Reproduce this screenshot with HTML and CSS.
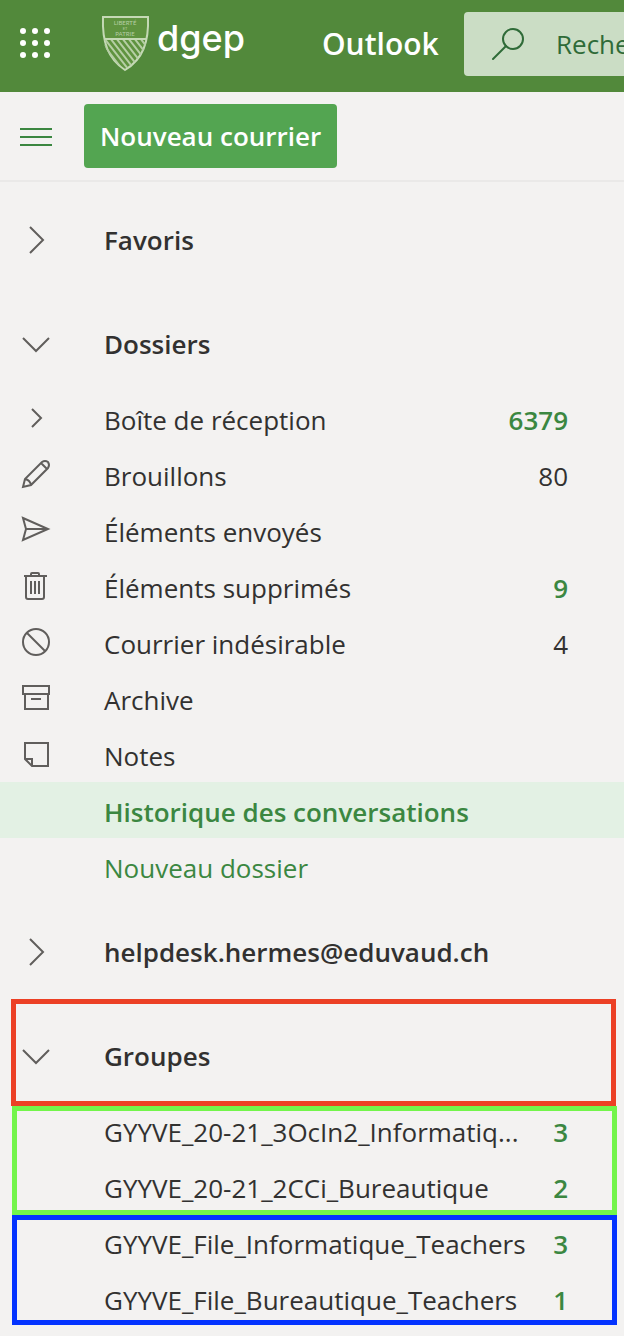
FILE: index.html
```html
<!DOCTYPE html>
<html lang="fr">
<head>
<meta charset="utf-8">
<meta name="viewport" content="width=device-width, initial-scale=1">
<title>Outlook</title>
<link rel="stylesheet" href="styles.css">
</head>
<body>
<header class="topbar">
  <button class="icon-button launcher" aria-label="Lanceur d'applications">
    <svg width="32" height="32" viewBox="0 0 32 32" fill="#fff"><circle cx="3" cy="4" r="3"/><circle cx="15" cy="4" r="3"/><circle cx="27" cy="4" r="3"/><circle cx="3" cy="16" r="3"/><circle cx="15" cy="16" r="3"/><circle cx="27" cy="16" r="3"/><circle cx="3" cy="28" r="3"/><circle cx="15" cy="28" r="3"/><circle cx="27" cy="28" r="3"/></svg>
  </button>
  <a class="logo" href="#" aria-label="dgep">
    <svg width="154" height="60" viewBox="0 0 154 60">
      <defs><clipPath id="shield"><path d="M3 26H47C44 39 36 49 25 55C14 49 6 39 3 26Z"/></clipPath></defs>
      <path d="M3 3H48C49 28 43 45 25 56C8 45 2 28 3 3Z" fill="#5f933f" stroke="#c5d9b5" stroke-width="2"/>
      <path d="M4 25H46" stroke="#c5d9b5" stroke-width="2"/>
      <path clip-path="url(#shield)" d="M-14 24L14 60M-8 24L20 60M-2 24L26 60M4 24L32 60M10 24L38 60M16 24L44 60M22 24L50 60M28 24L56 60M34 24L62 60M40 24L68 60" stroke="#b5cea4" stroke-width="2"/>
      <text class="motto" x="25" y="11">LIBERTÉ</text>
      <text class="motto motto-small" x="25" y="16">ET</text>
      <text class="motto" x="25" y="22">PATRIE</text>
      <text class="wordmark" x="57" y="37">dgep</text>
    </svg>
  </a>
  <a class="brand" href="#">Outlook</a>
  <label class="search">
    <svg width="34" height="34" viewBox="0 0 34 34" fill="none" stroke="#2f6b38" stroke-width="2" stroke-linecap="round"><circle cx="21" cy="12" r="10"/><path d="M14 19L1 32"/></svg>
    <input type="text" placeholder="Rechercher" aria-label="Rechercher">
  </label>
</header>
<div class="toolbar">
  <button class="icon-button" aria-label="Menu">
    <svg width="32" height="20" viewBox="0 0 32 20" stroke="#3b8741" stroke-width="2"><path d="M0 3H32M0 11H32M0 19H32"/></svg>
  </button>
  <button class="compose">Nouveau courrier</button>
</div>
<nav class="folders">
  <section>
    <button class="section-head">
      <svg class="icon" viewBox="0 0 32 32"><path d="M10 3L23 16L10 29"/></svg><span>Favoris</span>
    </button>
  </section>
  <section>
    <button class="section-head">
      <svg class="icon" viewBox="0 0 32 32"><path d="M3 10L16 23L29 10"/></svg><span>Dossiers</span>
    </button>
    <a class="row" href="#"><svg class="icon" viewBox="0 0 32 32"><path d="M12 7L21 16L12 25"/></svg><span class="name">Boîte de réception</span><span class="count unread">6379</span></a>
    <a class="row" href="#"><svg class="icon" viewBox="0 0 32 32"><path d="M3 29L5 21L22 4Q25 2 28 4Q30 7 28 10L11 27ZM5 21Q10 22 11 27M21 5L27 11"/></svg><span class="name">Brouillons</span><span class="count">80</span></a>
    <a class="row" href="#"><svg class="icon" viewBox="0 0 32 32"><path d="M3 4L28 15L3 26L6 15ZM6 15H27"/></svg><span class="name">Éléments envoyés</span></a>
    <a class="row" href="#"><svg class="icon" viewBox="0 0 32 32"><path d="M4 6H27M11 6V4Q11 3 12 3H18Q19 3 19 4V6M6 6V27Q6 29 8 29H22Q24 29 24 27V6M11 11V24M15 11V24M19 11V24"/></svg><span class="name">Éléments supprimés</span><span class="count unread">9</span></a>
    <a class="row" href="#"><svg class="icon" viewBox="0 0 32 32"><circle cx="16" cy="16" r="13"/><path d="M7 7L25 25"/></svg><span class="name">Courrier indésirable</span><span class="count">4</span></a>
    <a class="row" href="#"><svg class="icon" viewBox="0 0 32 32"><path d="M3 4H29V12H3ZM5 12V27H28V12M11 17H21"/></svg><span class="name">Archive</span></a>
    <a class="row" href="#"><svg class="icon" viewBox="0 0 32 32"><path d="M5 5H28V28H12L5 21ZM5 21H12V28"/></svg><span class="name">Notes</span></a>
    <a class="row selected" href="#"><span class="icon"></span><span class="name">Historique des conversations</span></a>
    <a class="row new-folder" href="#"><span class="icon"></span><span class="name">Nouveau dossier</span></a>
  </section>
  <section>
    <button class="section-head">
      <svg class="icon" viewBox="0 0 32 32"><path d="M10 3L23 16L10 29"/></svg><span>helpdesk.hermes@eduvaud.ch</span>
    </button>
  </section>
  <section>
    <div class="marked marked-red">
      <button class="section-head">
        <svg class="icon" viewBox="0 0 32 32"><path d="M3 10L16 23L29 10"/></svg><span>Groupes</span>
      </button>
    </div>
    <div class="marked marked-green">
      <a class="row" href="#"><span class="icon"></span><span class="name">GYYVE_20-21_3OcIn2_Informatiq...</span><span class="count unread">3</span></a>
      <a class="row" href="#"><span class="icon"></span><span class="name">GYYVE_20-21_2CCi_Bureautique</span><span class="count unread">2</span></a>
    </div>
    <div class="marked marked-blue">
      <a class="row" href="#"><span class="icon"></span><span class="name">GYYVE_File_Informatique_Teachers</span><span class="count unread">3</span></a>
      <a class="row" href="#"><span class="icon"></span><span class="name">GYYVE_File_Bureautique_Teachers</span><span class="count unread">1</span></a>
    </div>
  </section>
</nav>
</body>
</html>
```

FILE: styles.css
```css
* { box-sizing: border-box; }
body {
  margin: 0;
  background: #f3f2f1;
  color: #323130;
  font-family: "Open Sans", "Noto Sans", sans-serif;
  font-size: 26px;
  line-height: 36px;
  overflow-x: hidden;
}
button {
  border: 0;
  padding: 0;
  background: none;
  color: inherit;
  font: inherit;
}
a { color: inherit; text-decoration: none; }
svg { display: block; flex: none; }

.topbar {
  display: flex;
  align-items: center;
  height: 92px;
  padding: 0 0 4px 20px;
  background: #52893b;
  color: #fff;
}
.launcher { margin-right: 48px; padding-bottom: 2px; }
.logo { margin-right: 68px; }
.motto {
  fill: #b5cea4;
  font-family: Lato, sans-serif;
  font-size: 6px;
  text-anchor: middle;
}
.motto-small { font-size: 4px; }
.wordmark {
  fill: #fff;
  font-family: Inter, sans-serif;
  font-size: 36px;
  font-weight: 500;
}
.brand {
  flex: none;
  width: 142px;
  font-size: 30px;
  font-weight: 600;
}
.search {
  display: flex;
  flex: 1;
  align-items: center;
  gap: 30px;
  min-width: 0;
  height: 64px;
  padding-left: 28px;
  overflow: hidden;
  border-radius: 4px 0 0 4px;
  background: #cbddc5;
}
.search input {
  flex: 1;
  min-width: 0;
  padding: 0;
  border: 0;
  outline: 0;
  background: none;
  color: #2f6b38;
  font: inherit;
}
.search input::placeholder { color: #2f6b38; opacity: 1; }

.toolbar {
  display: flex;
  align-items: center;
  gap: 32px;
  height: 90px;
  padding: 0 20px;
  border-bottom: 2px solid #eae9e8;
}
.compose {
  height: 64px;
  padding: 0 16px;
  border-radius: 4px;
  background: #53a551;
  color: #fff;
  font-weight: 600;
}

.folders {
  display: flex;
  flex-direction: column;
  gap: 12px;
  padding: 12px 0 10px;
}
.section-head {
  display: flex;
  align-items: center;
  gap: 52px;
  width: 100%;
  height: 92px;
  padding: 0 20px;
  font-weight: 600;
  text-align: left;
}
.icon {
  flex: none;
  width: 32px;
  height: 32px;
  fill: none;
  stroke: #605e5c;
  stroke-width: 2;
}
.row {
  display: flex;
  align-items: center;
  height: 56px;
  padding: 0 56px 0 20px;
}
.name {
  flex: 1;
  min-width: 0;
  padding-top: 4px;
  margin-left: 52px;
  white-space: nowrap;
}
.count { padding-top: 4px; }
.unread { color: #3b8741; font-weight: 600; }
.selected { background: #e3f1e4; color: #3b8741; font-weight: 600; }
.new-folder { color: #3b8741; }

/* Coloured frames drawn over the group rows */
.marked { position: relative; }
.marked::after {
  content: "";
  position: absolute;
  border: 5px solid;
  pointer-events: none;
}
.marked-red::after { inset: -11px 8px -4px 11px; border-color: #ec4025; }
.marked-green::after { inset: 4px 7px -1px 12px; border-color: #73f54b; }
.marked-blue::after { inset: 1px 7px 1px 12px; border-color: #0433ff; }
```
